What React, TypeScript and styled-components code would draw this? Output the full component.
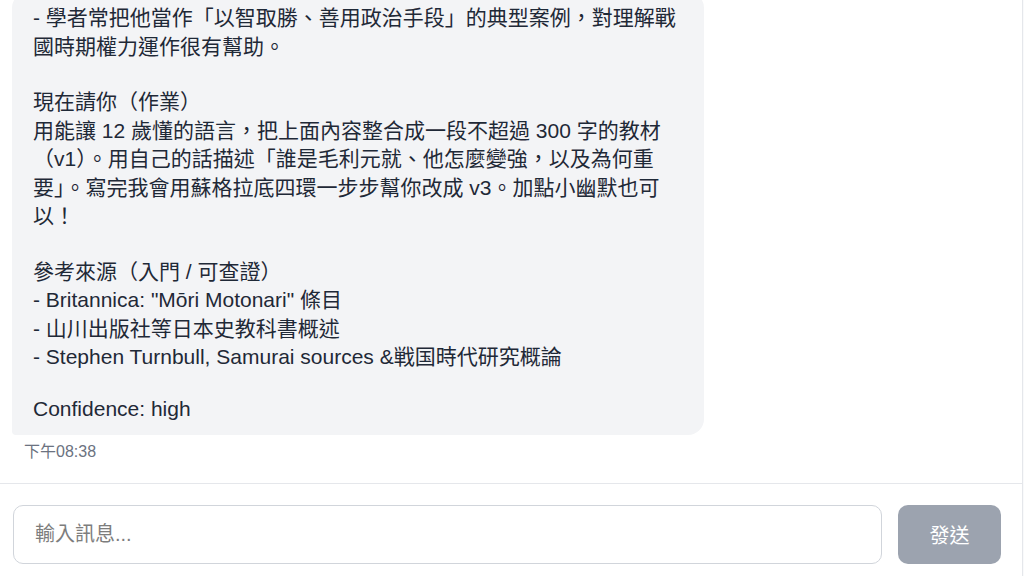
import React from 'react'
import styled, {createGlobalStyle} from 'styled-components'

const GlobalStyle = createGlobalStyle`
    * { box-sizing: border-box; }
    html, body {
        margin: 0;
        padding: 0;
        height: 100%;
        background: #f9fafb;
    }
    #root { height: 100%; }
`

const paragraphs = [
    '- 學者常把他當作「以智取勝、善用政治手段」的典型案例，對理解戰國時期權力運作很有幫助。',
    '現在請你（作業）\n用能讓 12 歲懂的語言，把上面內容整合成一段不超過 300 字的教材（v1）。用自己的話描述「誰是毛利元就、他怎麼變強，以及為何重要」。寫完我會用蘇格拉底四環一步步幫你改成 v3。加點小幽默也可以！',
    '參考來源（入門 / 可查證）\n- Britannica: "Mōri Motonari" 條目\n- 山川出版社等日本史教科書概述\n- Stephen Turnbull, Samurai sources &戦国時代研究概論',
]

const App: React.FC = () => {
    return (
        <Shell>
            <GlobalStyle />
            <Messages>
                <Bubble>
                    {paragraphs.map((p, i) => <Para key={i}>{p}</Para>)}
                    <Confidence>Confidence: high</Confidence>
                </Bubble>
                <Time>下午08:38</Time>
            </Messages>
            <Composer>
                <Input placeholder="輸入訊息..." />
                <SendButton>發送</SendButton>
            </Composer>
        </Shell>
    )
}

export default App

const Shell = styled.div`
    width: 1023px;
    height: 576px;
    display: flex;
    flex-direction: column;
    background: #ffffff;
    border-right: 1px solid #e5e7eb;
    font-family: "Liberation Sans", "Noto Sans CJK TC", sans-serif;
`

// 最新訊息貼齊底部，上面超出的部分直接裁掉
const Messages = styled.div`
    flex: 1;
    min-height: 0;
    overflow: hidden;
    display: flex;
    flex-direction: column;
    justify-content: flex-end;
    align-items: flex-start;
    padding: 0 12px 21px;
`

const Bubble = styled.div`
    flex-shrink: 0;
    width: 692px;
    padding: 12px 21px;
    background: #f3f4f6;
    color: #1f2937;
    border-radius: 16px 16px 16px 4px;
    font-size: 21px;
    line-height: 28.5px;
`

const Para = styled.p`
    margin: 0 0 27px;
    white-space: pre-wrap;
`

const Confidence = styled.p`
    margin: -4px 0 0;
`

const Time = styled.div`
    margin: 7px 0 0 12px;
    font-size: 16px;
    line-height: 20px;
    color: #6b7280;
`

const Composer = styled.div`
    flex-shrink: 0;
    display: flex;
    gap: 16px;
    padding: 21px 21px 12px 13px;
    border-top: 1px solid #e5e7eb;
`

const Input = styled.input`
    flex: 1;
    height: 59px;
    padding: 0 21px;
    border: 1px solid #d1d5db;
    border-radius: 10px;
    background: #ffffff;
    font-family: inherit;
    font-size: 20px;
    color: #111827;
    outline: none;

    &::placeholder {
        color: #7d7d7d;
    }
`

const SendButton = styled.button`
    width: 103px;
    height: 59px;
    border: none;
    border-radius: 10px;
    background: #9ca3af;
    color: #ffffff;
    font-family: inherit;
    font-size: 20px;
    cursor: not-allowed;
`
